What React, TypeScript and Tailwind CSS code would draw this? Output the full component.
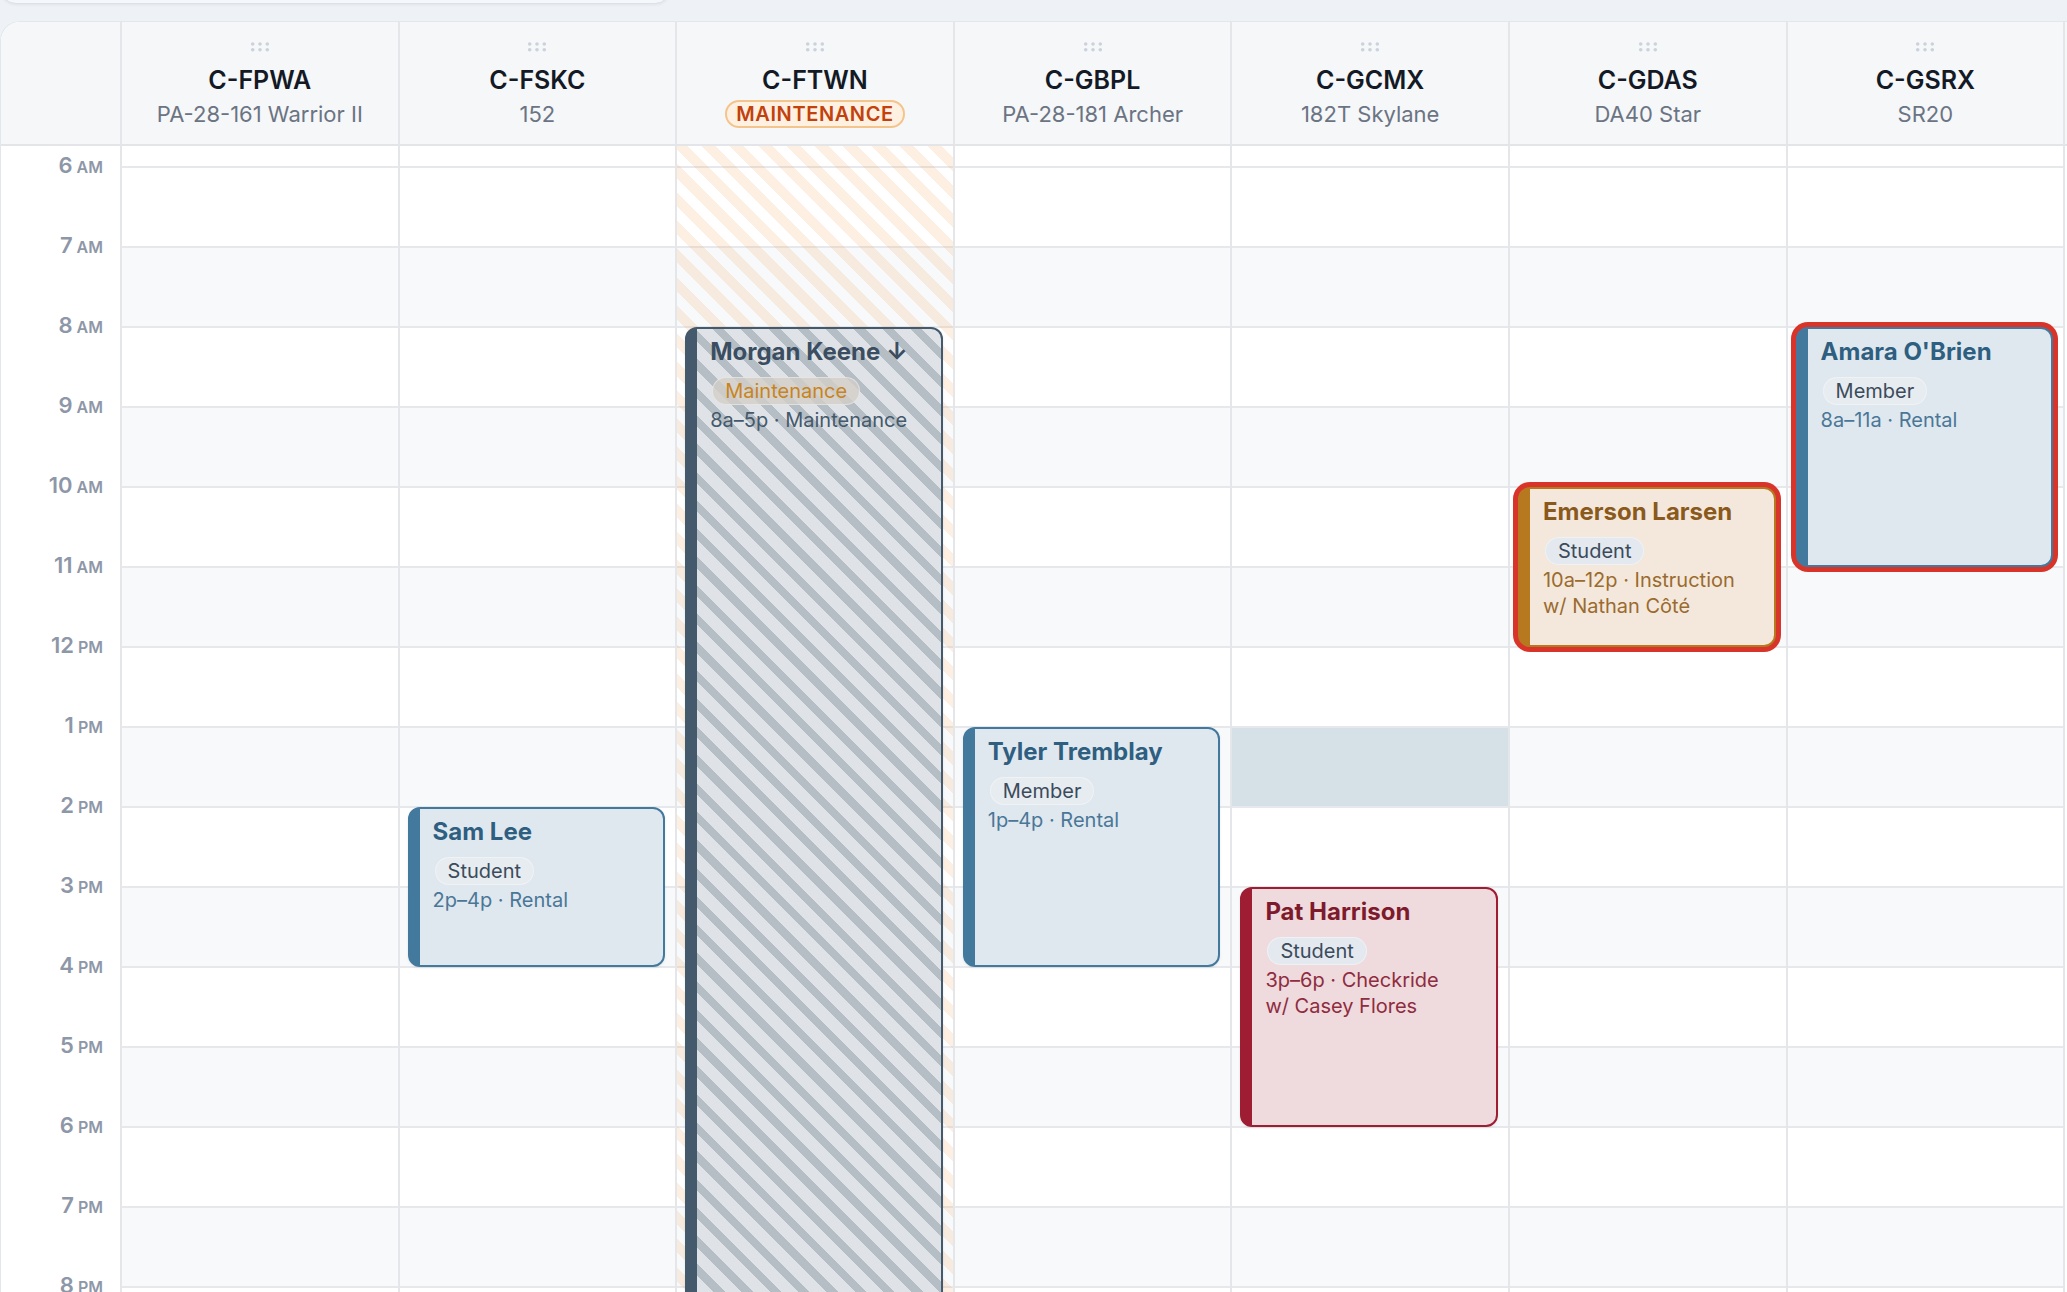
import React from "react";

type Tone = "blue" | "red" | "amber" | "maint";

interface Aircraft {
  tail: string;
  model?: string;
  inMaintenance?: boolean;
}

interface Booking {
  col: number;
  name: string;
  role: string;
  start: number;
  end: number;
  lines: string[];
  tone: Tone;
  flagged?: boolean;
}

const HOUR_PX = 80;
const TOP_PAD = 20;
const FIRST_HOUR = 6;
const HOURS = [6, 7, 8, 9, 10, 11, 12, 13, 14, 15, 16, 17, 18, 19, 20];

const AIRCRAFT: Aircraft[] = [
  { tail: "C-FPWA", model: "PA-28-161 Warrior II" },
  { tail: "C-FSKC", model: "152" },
  { tail: "C-FTWN", inMaintenance: true },
  { tail: "C-GBPL", model: "PA-28-181 Archer" },
  { tail: "C-GCMX", model: "182T Skylane" },
  { tail: "C-GDAS", model: "DA40 Star" },
  { tail: "C-GSRX", model: "SR20" },
];

const BOOKINGS: Booking[] = [
  { col: 1, name: "Sam Lee", role: "Student", start: 14, end: 16, lines: ["2p–4p · Rental"], tone: "blue" },
  { col: 2, name: "Morgan Keene ↓", role: "Maintenance", start: 8, end: 22, lines: ["8a–5p · Maintenance"], tone: "maint" },
  { col: 3, name: "Tyler Tremblay", role: "Member", start: 13, end: 16, lines: ["1p–4p · Rental"], tone: "blue" },
  { col: 4, name: "Pat Harrison", role: "Student", start: 15, end: 18, lines: ["3p–6p · Checkride", "w/ Casey Flores"], tone: "red" },
  { col: 5, name: "Emerson Larsen", role: "Student", start: 10, end: 12, lines: ["10a–12p · Instruction", "w/ Nathan Côté"], tone: "amber", flagged: true },
  { col: 6, name: "Amara O'Brien", role: "Member", start: 8, end: 11, lines: ["8a–11a · Rental"], tone: "blue", flagged: true },
];

// slot being hovered / picked for a new booking
const PICKED = { col: 4, hour: 13 };

const TONES: Record<Tone, { card: string; name: string; time: string; pill: string }> = {
  blue: {
    card: "border-[#44799e] bg-[#e0e8ef]",
    name: "text-[#2f5f80]",
    time: "text-[#4a7797]",
    pill: "bg-[#e7ecf1] text-[#3b4b5b]",
  },
  red: {
    card: "border-[#9f1d33] bg-[#efdadd]",
    name: "text-[#7d1a2c]",
    time: "text-[#8e2c40]",
    pill: "bg-[#e3e9ef] text-[#3b4b5b]",
  },
  amber: {
    card: "border-[#b7791f] bg-[#f4e8dc]",
    name: "text-[#8a5a1c]",
    time: "text-[#9a6b2f]",
    pill: "bg-[#e3e9ef] text-[#3b4b5b]",
  },
  maint: {
    card: "border-[#44596b] bg-[#dfe3e7] bg-[image:repeating-linear-gradient(45deg,#b5bdc5_0_8px,transparent_8px_20px)]",
    name: "text-[#3b4e61]",
    time: "text-[#44596b]",
    pill: "bg-[#d3cec8]/80 text-[#c8841e]",
  },
};

function hourLabel(h: number) {
  const n = h > 12 ? h - 12 : h;
  return { n, suffix: h < 12 ? "AM" : "PM" };
}

function DragDots() {
  return (
    <svg width="20" height="10" viewBox="0 0 20 10" fill="#cbd2db">
      <circle cx="2.7" cy="2" r="1.8" />
      <circle cx="10" cy="2" r="1.8" />
      <circle cx="17.3" cy="2" r="1.8" />
      <circle cx="2.7" cy="7.7" r="1.8" />
      <circle cx="10" cy="7.7" r="1.8" />
      <circle cx="17.3" cy="7.7" r="1.8" />
    </svg>
  );
}

function BookingCard({ b }: { b: Booking }) {
  const t = TONES[b.tone];
  const top = TOP_PAD + (b.start - FIRST_HOUR) * HOUR_PX + 1;
  const height = (b.end - b.start) * HOUR_PX;
  return (
    <div
      className={`absolute left-2 right-[10px] overflow-hidden rounded-[12px] border-2 border-l-[12px] shadow-[0_1px_3px_rgba(15,23,42,0.08)] ${t.card} ${
        b.flagged ? "ring-[5px] ring-[#d8342a]" : ""
      }`}
      style={{ top, height }}
    >
      <div className="pl-[13px] pr-2 pt-[9px]">
        <div className={`text-[24px] font-bold leading-[28px] ${t.name}`}>{b.name}</div>
        <span
          className={`ml-[2px] mt-[11px] inline-flex h-[28px] items-center rounded-full border border-white/40 px-3 text-[20px] leading-none ${t.pill}`}
        >
          {b.role}
        </span>
        <div className={`mt-[2px] text-[20px] leading-[26px] ${t.time}`}>
          {b.lines.map((l) => (
            <div key={l}>{l}</div>
          ))}
        </div>
      </div>
    </div>
  );
}

export default function App() {
  return (
    <div className="h-[1292px] w-[2067px] overflow-hidden bg-[#eef2f6] font-['Inter',sans-serif]">
      {/* toolbar, scrolled almost out of view */}
      <div className="-mt-[36px] h-[40px] w-[671px] rounded-[16px] border border-[#dce2e9] bg-[#f5f7fa] shadow-[0_1px_3px_rgba(15,23,42,0.06)]" />

      <div className="mt-[17px] overflow-hidden rounded-tl-[20px] border-l border-t border-[#e3e6ea] bg-white">
        {/* aircraft header */}
        <div className="flex h-[124px] border-b-2 border-[#e3e5e9] bg-[#f6f7f9]">
          <div className="w-[121px] shrink-0 border-r-2 border-[#e4e6ea]" />
          {AIRCRAFT.map((a) => (
            <div key={a.tail} className="flex w-[277.6px] shrink-0 flex-col items-center border-r-2 border-[#e4e6ea] pt-[20px]">
              <DragDots />
              <div className="mt-[12px] text-[25px] font-semibold leading-[32px] text-[#141a25]">{a.tail}</div>
              <div className="mt-[4px] flex h-[28px] items-center">
                {a.inMaintenance ? (
                  <span className="inline-flex h-[28px] items-center rounded-full border-2 border-[#f4c48d] bg-[#fff1e2] px-[9px] text-[20px] font-semibold uppercase leading-none tracking-[0.03em] text-[#c2410c]">
                    Maintenance
                  </span>
                ) : (
                  <span className="text-[22px] leading-[28px] text-[#6b7483]">{a.model}</span>
                )}
              </div>
            </div>
          ))}
        </div>

        {/* day grid */}
        <div className="flex">
          <div className="w-[121px] shrink-0 border-r-2 border-[#e4e6ea] pt-[20px]">
            {HOURS.map((h) => {
              const { n, suffix } = hourLabel(h);
              return (
                <div key={h} className="h-[80px]">
                  <div className="-translate-y-1/2 pr-[17px] text-right font-semibold leading-[26px] text-[#8e97a8]">
                    <span className="text-[22px]">{n}</span> <span className="text-[16px]">{suffix}</span>
                  </div>
                </div>
              );
            })}
          </div>

          {AIRCRAFT.map((a, ci) => (
            <div key={a.tail} className="relative w-[277.6px] shrink-0 border-r-2 border-[#e4e6ea] pt-[20px]">
              {HOURS.map((h, hi) => {
                const picked = PICKED.col === ci && PICKED.hour === h;
                const bg = picked ? "bg-[#d6e0e7]" : hi % 2 === 1 ? "bg-[#f8f9fa]" : "bg-white";
                return <div key={h} className={`h-[80px] border-t-2 border-[#e6e8ec] ${bg}`} />;
              })}

              {a.inMaintenance && (
                <div className="pointer-events-none absolute inset-0 bg-[image:repeating-linear-gradient(45deg,rgba(240,160,80,0.16)_0_10px,transparent_10px_20px)]" />
              )}

              {BOOKINGS.filter((b) => b.col === ci).map((b) => (
                <BookingCard key={b.name} b={b} />
              ))}
            </div>
          ))}
        </div>
      </div>
    </div>
  );
}
